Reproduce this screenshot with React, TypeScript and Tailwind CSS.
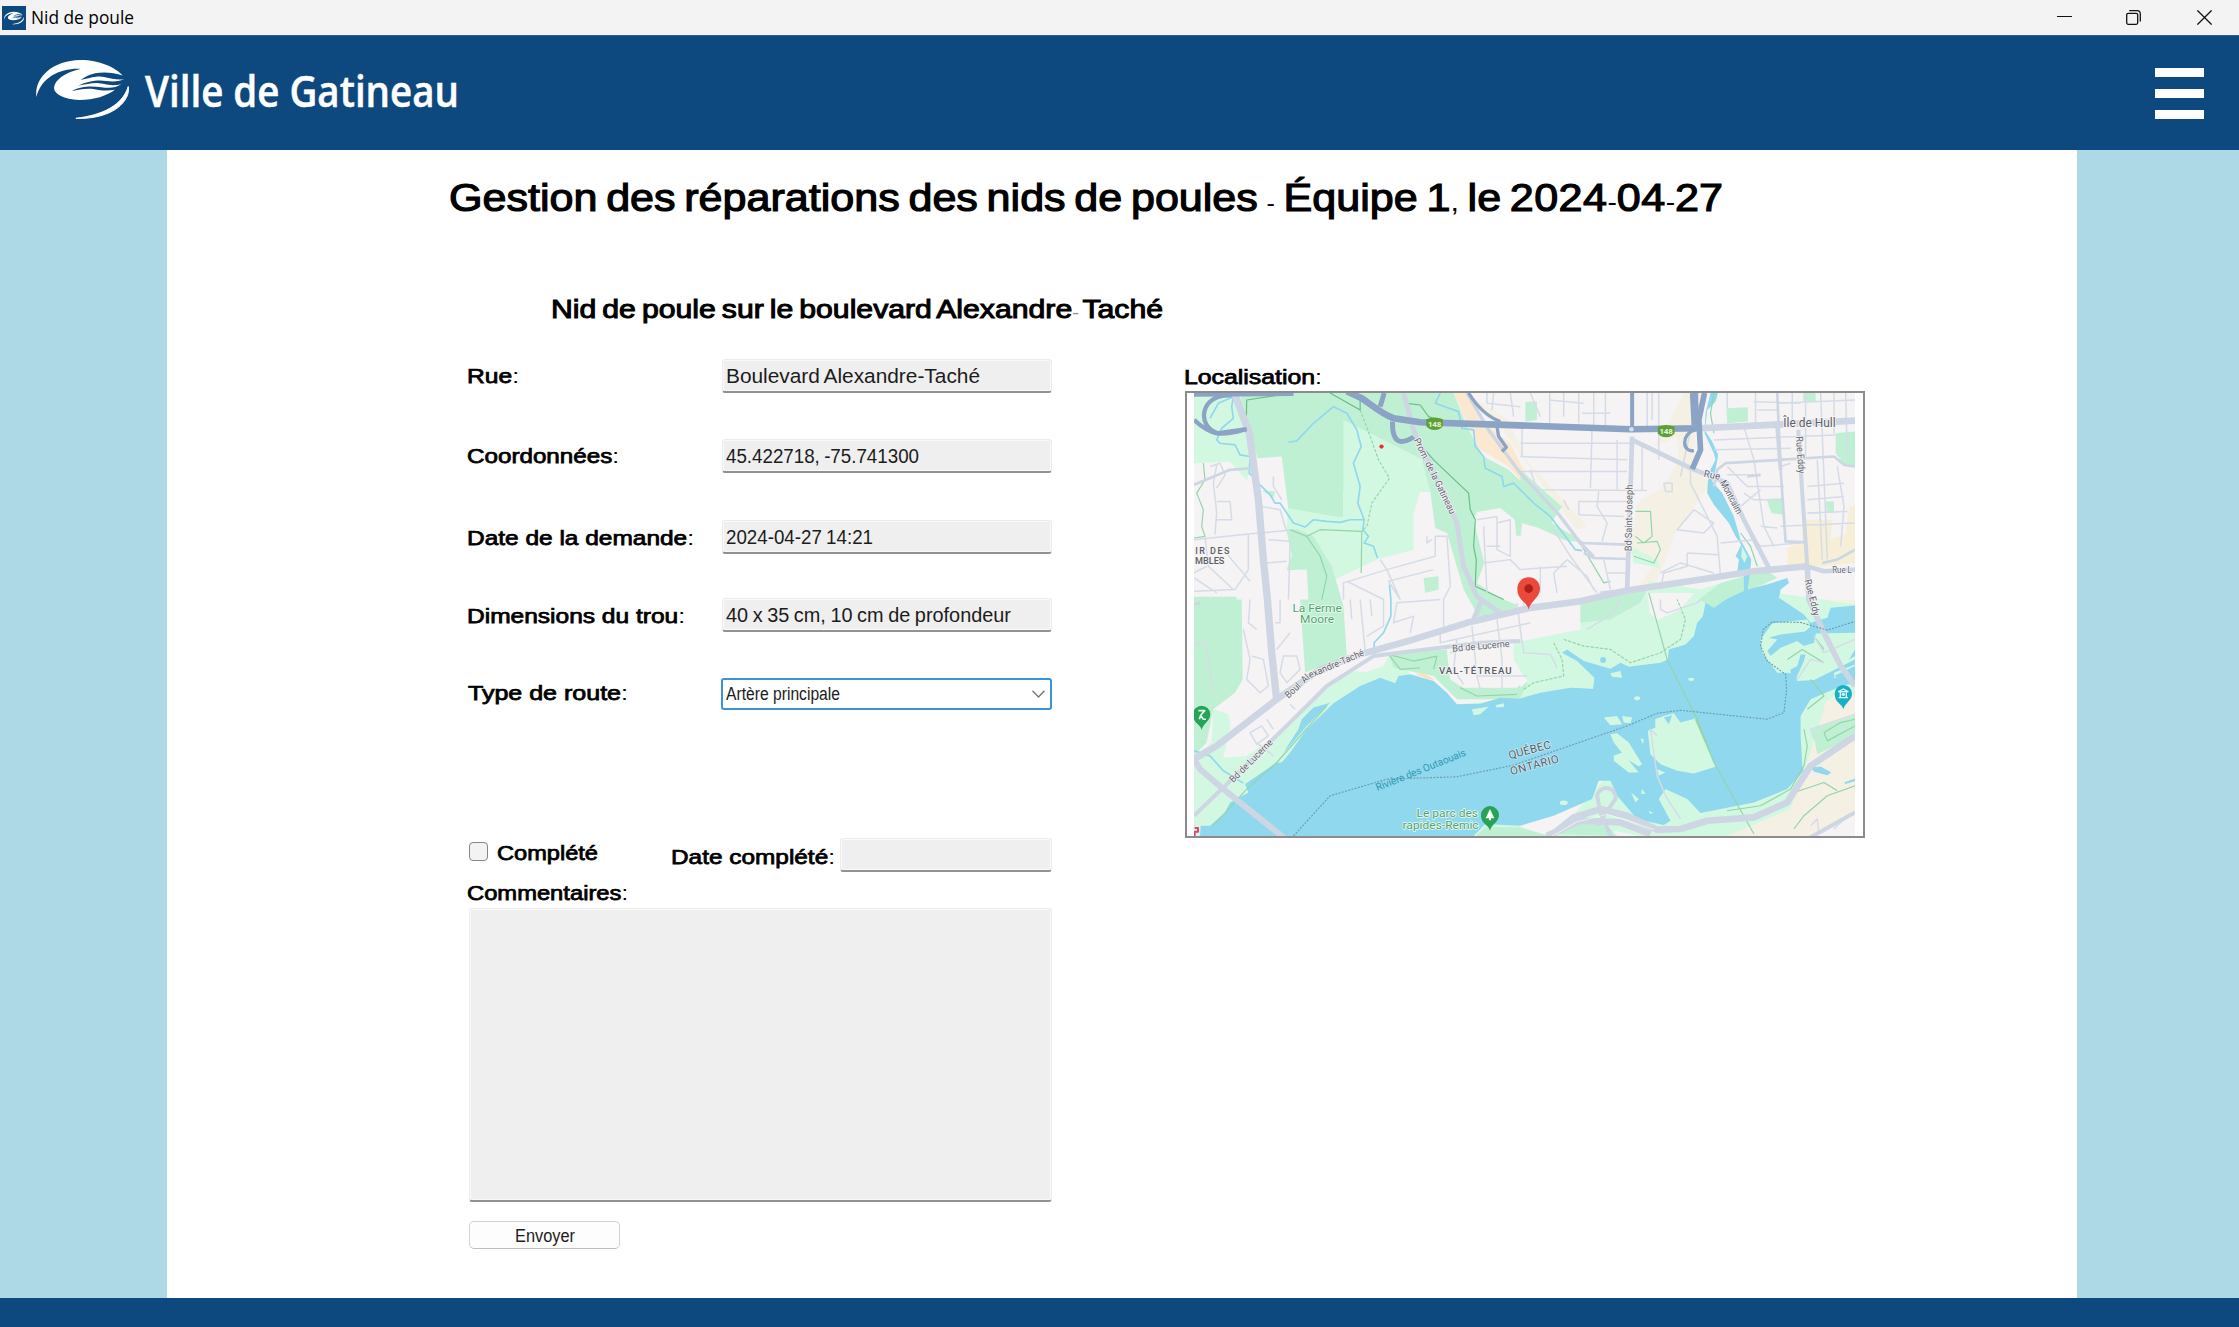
import { useLayoutEffect, useRef, useState } from "react";
import type { ReactNode } from "react";

/** Text stretched or condensed horizontally so that it fills a fixed-width slot. */
function FitText({ width, className = "", children }: { width: string; className?: string; children: ReactNode }) {
  const outer = useRef<HTMLSpanElement>(null);
  const inner = useRef<HTMLSpanElement>(null);
  const [scale, setScale] = useState(1);
  useLayoutEffect(() => {
    if (outer.current && inner.current && inner.current.offsetWidth > 0) {
      setScale(outer.current.offsetWidth / inner.current.getBoundingClientRect().width);
    }
  }, []);
  return (
    <span ref={outer} className={`block shrink-0 whitespace-nowrap ${width} ${className}`}>
      <span ref={inner} className="inline-block origin-left" style={{ transform: `scaleX(${scale})` }}>
        {children}
      </span>
    </span>
  );
}

const LABEL = "text-[20px] leading-[34px] text-black [-webkit-text-stroke:0.75px_#000]";

/** Punctuation is lighter than the letters beside it. */
function Thin({ className = "", children }: { className?: string; children: ReactNode }) {
  return <span className={`[-webkit-text-stroke:0] ${className}`}>{children}</span>;
}

function Emblem({ className }: { className: string }) {
  return (
    <svg className={className} viewBox="0 0 280 178" fill="none">
      <path fill="#fff" d="M1 112C-6 62 38 2 135 0C190 0 240 22 261 47C235 38 205 36 178 40C160 44 146 52 134 60C150 58 172 50 192 50C212 50 232 62 266 58C236 70 214 62 194 62C170 62 152 66 126 78C150 74 170 68 190 70C214 72 232 82 258 72C236 88 216 84 196 82C172 80 140 76 108 94C130 90 150 84 176 88C196 92 214 94 238 90C214 108 176 121 130 121C84 119 54 104 54 84C56 60 86 38 134 27C76 24 16 50 1 112Z" />
      <path fill="#fff" d="M278 80C286 120 236 180 120 176C200 166 260 138 278 80Z" stroke="#fff" strokeWidth="3" />
    </svg>
  );
}

function TitleBar() {
  return (
    <div className="flex h-[35px] w-full items-center bg-[#f3f3f3] pl-[2px]">
      <div className="flex size-6 items-center justify-center bg-[#0d497e]">
        <Emblem className="h-[14px] w-[20px]" />
      </div>
      <FitText width="w-[103px]" className="-mt-[2px] ml-[5px] font-['Open_Sans','Noto_Sans',sans-serif] text-[17.5px] leading-[32px] text-black">
        Nid de poule
      </FitText>
      <div className="ml-auto flex items-center pr-[27px]">
        <svg className="mr-[54px] size-[15px]" viewBox="0 0 15 15" stroke="#111" fill="none">
          <path d="M0 6.5H15" />
        </svg>
        <svg className="mr-[56px] size-[15px]" viewBox="0 0 15 15" stroke="#111" strokeWidth="1.3" fill="none">
          <rect x=".7" y="3.3" width="11" height="11" rx="1.5" />
          <path d="M3.2 .7H11a3.3 3.3 0 0 1 3.3 3.3V11.5" />
        </svg>
        <svg className="size-[15px]" viewBox="0 0 15 15" stroke="#111" strokeWidth="1.3">
          <path d="M.4 .4L14.6 14.6M14.6 .4L.4 14.6" />
        </svg>
      </div>
    </div>
  );
}

function Header() {
  return (
    <header className="flex h-[115px] w-full items-start border-t border-[#2f6190] bg-[#0d497e] pl-9 pr-[35px]">
      <Emblem className="mt-[24px] h-[59px] w-[93px]" />
      <FitText width="w-[314px]" className="ml-[16px] mt-[24px] font-['Open_Sans','Noto_Sans',sans-serif] text-[43px] font-semibold leading-[62px] text-white [-webkit-text-stroke:0.5px_#fff]">
        Ville de Gatineau
      </FitText>
      <div className="ml-auto mt-[32px] flex w-[49px] flex-col gap-[12px]">
        <div className="h-[9px] bg-white" />
        <div className="h-[9px] bg-white" />
        <div className="h-[9px] bg-white" />
      </div>
    </header>
  );
}

function ReadOnlyBox({ className, children }: { className: string; children?: ReactNode }) {
  return (
    <div className={`shrink-0 rounded-[3px] border border-b-2 border-[#ececec] border-b-[#929292] bg-[#efefef] shadow-[inset_0_0_0_1px_#fafafa] ${className}`}>
      {children}
    </div>
  );
}

function Field({ label, labelWidth, labelClass, value, valueWidth, className }: {
  label: string; labelWidth: string; labelClass: string; value: string; valueWidth: string; className: string;
}) {
  return (
    <div className={`flex h-[34px] items-start justify-between ${className}`}>
      <FitText width={labelWidth} className={`${LABEL} ${labelClass}`}>{label}<Thin>:</Thin></FitText>
      <ReadOnlyBox className="h-[34px] w-[330px] pl-[3px]">
        <FitText width={valueWidth} className="text-[20.5px] leading-[31px] text-[#1c1c1c] [word-spacing:-1px]">{value}</FitText>
      </ReadOnlyBox>
    </div>
  );
}

const WATER = "#90d8ee";
const PARK = "#c0f0d4";
const MEADOW = "#d2f8e2";
const ROAD = "#cdd6e2";
const HIGHWAY = "#8ba3c4";

function Pin({ x, y, r, tip, fill }: { x: number; y: number; r: number; tip: number; fill: string }) {
  return (
    <path
      fill={fill}
      d={`M${x} ${y - r}a${r} ${r} 0 0 1 ${r} ${r}c0 ${r * 0.8} ${-r * 0.85} ${(tip - y) * 0.6} ${-r} ${tip - y}c${-r * 0.15} ${-(tip - y) * 0.4} ${-r} ${-(tip - y) * 0.4} ${-r} ${-(tip - y)}a${r} ${r} 0 0 1 ${r} ${-r}Z`}
    />
  );
}

function CityMap() {
  return (
    <svg className="h-[443px] w-[661px] font-[Roboto,sans-serif]" viewBox="42 99 1981 1332" preserveAspectRatio="none" fill="none" strokeLinejoin="round">
      <path fill="#f5f3f4" d="M42 99H2023V1431H42Z" />

      {/* beige districts */}
      <path fill="#f5f0e4" d="M1510 99H1575L1545 215L1540 330L1590 370L1480 530L1440 640L1400 720L1360 700L1430 600L1350 560L1370 430L1450 380L1495 300L1490 230L1420 260L1470 180Z" />
      <path fill="#f7eed8" d="M1865 480H1955L1950 540L2023 510V610L1870 625L1820 635V565L1865 550Z" />
      <path fill="#f7eed8" d="M2005 440H2023V520H1995Z" />
      <path fill="#fbe8d0" d="M820 99H860L900 180L990 250L1060 390L1080 430L985 320L900 270L865 200Z" />
      <path fill="#f5f0e4" d="M880 115L960 200L1090 380L1190 510L1220 500L1030 290L985 180Z" />
      <path fill="#f5f0e4" d="M1840 720H2023V745L1900 760Z" />

      {/* parks */}
      <path fill={MEADOW} d="M42 99H195L215 320L200 362L150 305L42 310Z" />
      <path fill={PARK} d="M180 99H820L860 200L910 290L985 330L1060 400L1140 440L1115 490L1205 545L1165 545L1075 505L1025 490L1022 528H1008L1003 480L960 445L890 457L880 480L912 610L890 670L950 712L1020 740L900 780L850 690L800 520L765 505L750 395H490V475L325 450L305 290L232 295Z" />
      <path fill={MEADOW} d="M490 180L725 298L750 395H720L700 460V570L590 600L465 660L455 620L385 520L320 512L322 445L490 475Z" />
      <path fill={PARK} d="M318 508L350 508L400 530L455 620L490 740L500 890L375 940L360 720H385L380 630L320 632L335 585Z" />
      <path fill={PARK} d="M42 720H185L188 960L165 1000L100 1050L42 1080Z M42 1080L100 1050L80 1150L42 1190Z M730 655L775 650V690L735 700Z M42 712H170V722H42Z M245 392L285 395L280 415Z" />
      <path fill={MEADOW} d="M100 1050L145 1065L152 1100L130 1195L200 1190L290 1130L440 980L560 900L625 895L640 880L700 960L830 1035L1020 1020V1440H42V1190L95 1150Z" />
      <path fill="#f5f3f4" d="M152 1100L130 1195L200 1190L310 1090L430 980L560 900L600 890L300 980Z" />
      <path fill="#f5f3f4" d="M480 940L560 895L625 890L610 920L560 938L500 935Z" />
      <path fill={PARK} d="M625 880L800 870L810 960L840 980L1020 970L1080 960V1020H830L760 950L640 925Z" />
      <path fill="#f5f3f4" d="M800 872L1000 850L1050 950L1010 985L850 985L810 960Z" />
      <path fill={MEADOW} d="M1000 850L1200 810L1205 720L1400 690H1405V665L1560 690L1720 640L1760 675L1640 760L1560 890L1240 985L1080 1002L1020 1015L1042 970L1000 900Z" />
      <path fill="#f5f3f4" d="M1400 700H1540L1500 750L1430 782L1408 760Z M1010 730L1195 715L1200 810L1022 840Z M1020 935L1042 965L1020 985Z" />
      <path fill={PARK} d="M1200 720L1400 690L1380 730L1290 780L1200 790Z M1555 720L1620 670L1760 632L1790 655L1640 720L1600 745Z" />
      <path fill={MEADOW} d="M1350 560L1430 600L1440 625L1360 610Z" />
      <path fill={PARK} d="M1035 125H1070V180L1035 185Z M1638 145L1702 142V185L1640 190Z M1868 99H1905V125H1868Z M1965 220L2023 215V320L1990 315L1965 280Z M1758 418L1805 415L1808 465L1772 460Z M1935 425H1960V458H1938Z M1020 330L1145 440L1110 490L1210 548L1150 540L1070 500L1020 480Z M868 710L900 700L955 745L900 770Z" />
      <path fill={MEADOW} d="M1790 700L2023 735V1440H1120L1235 1300Z" />
      <path fill="#f5f0e4" d="M2023 1010V1431H1640L1830 1350L1890 1180L1935 1030L1990 980Z" />
      <path fill="#f5f3f4" d="M1900 1431L2023 1360V1431Z M1300 1415L1380 1431H1300Z" />

      {/* river */}
      <path fill={WATER} d="M60 1431L62 1400H90L135 1360L150 1330L205 1300L195 1275L290 1210H305L330 1180L380 1110L460 1032L540 980L600 955L645 972L655 950L690 945L760 965L800 1000L830 1035L900 1033L960 1015L1020 1018L1080 1000L1170 985L1238 988L1242 955L1190 905L1145 880L1160 870L1210 905L1290 928L1320 910L1345 922L1440 910L1462 900L1465 870L1515 855L1540 830L1550 790L1567 770L1575 730L1600 745L1640 718L1700 690L1760 675L1820 655L1825 670L1800 690L1795 715L1870 765L1890 790L1940 775L1950 745L2023 738V965L1960 990L1890 1020L1860 1070V1130L1865 1220L1870 1235L1820 1290L1720 1330L1560 1362L1520 1320L1455 1290L1435 1320L1470 1385L1450 1398L1370 1380L1310 1310L1290 1265H1255L1235 1320L1120 1370L1020 1400L915 1395L880 1431Z" />
      <path fill={WATER} d="M1590 99H1612L1605 125L1580 150L1576 190L1575 215L1595 245L1613 285L1605 330L1595 365L1625 400L1660 470L1680 540L1712 600L1708 645L1700 695H1690L1690 650L1670 640L1675 600L1665 590L1682 555L1665 530L1645 490L1600 435L1580 400L1582 365L1590 330L1605 300L1600 280L1572 220L1575 160Z" />
      <path fill={MEADOW} d="M1684 560L1700 590L1692 610L1682 590Z" />
      <path fill={WATER} d="M1890 1225L1920 1222L1952 1240L1940 1248L1900 1238Z M1990 1270L2023 1258V1266L1995 1275Z" />

      {/* islands */}
      <g fill={MEADOW}>
        <path d="M1775 792L1880 780L1890 800L1870 820L1900 822L2023 820V945L1940 960L1850 965L1845 945L1820 940L1790 940L1745 880L1740 840Z" />
        <path d="M1402 1115L1425 1105L1424 1080L1450 1070L1480 1062L1500 1090L1545 1078L1575 1150L1607 1222L1540 1243L1490 1235L1440 1215L1410 1185Z" />
        <path d="M1270 1075L1310 1070L1325 1095L1290 1098Z M1325 1070L1355 1075L1350 1092L1330 1090Z M1290 1125L1310 1122L1345 1150L1385 1215L1375 1222L1340 1200L1300 1150Z M1300 1190L1325 1180L1375 1240L1345 1240L1300 1205Z M1380 1138L1390 1140L1387 1155Z M1290 942L1320 935L1325 955L1295 952Z M1430 1230L1455 1240L1435 1250Z M1352 1300L1375 1320L1365 1330Z M1385 1290L1395 1305L1382 1305Z M1405 1355L1420 1362L1408 1364Z" />
        <path d="M875 1050L925 1042L900 1065L880 1068Z M945 1038L970 1032L972 1042L950 1045Z" />
        <ellipse cx="1532" cy="960" rx="9" ry="5" /><ellipse cx="1370" cy="1017" rx="9" ry="6" /><ellipse cx="1150" cy="1331" rx="12" ry="7" />
      </g>
      <g fill={WATER}>
        <path d="M1760 875L1790 840L1765 835L1800 825L1880 815L1910 800L1900 850L1870 860L1850 845L1800 865L1770 890Z" />
        <path d="M1830 930L1850 920L1860 885L1875 885L1870 905L1845 960L1830 980Z M1905 960L2023 900V915L1960 940V960L2023 940V970L1900 1000L1870 975Z" />
        <path d="M1960 950L2023 920V960L1980 960Z M2005 900L2023 870V890Z M1450 1075L1475 1068L1465 1095Z" />
        <circle cx="1268" cy="902" r="9" />
        <path d="M355 1110L365 1080L400 1045L450 1030L380 1100L325 1165L310 1180Z" />
      </g>
      <path fill="#fbe0b8" d="M705 943L730 942L765 962L740 958Z" />
      <path fill={PARK} d="M1120 1425L1190 1390L1260 1380L1310 1431Z" />
      <path fill={PARK} d="M885 1431L915 1405L1020 1405L1110 1431Z M1895 1110L2023 1068V1130L1910 1185Z" />

      {/* streams */}
      <g stroke={WATER} strokeWidth="5">
        <path d="M325 247L350 243L400 190L460 140L500 160L530 210L543 260L520 310L540 380L533 430L552 480L510 480L480 488L440 485L400 480L375 502L340 490L320 460L300 430L285 430L270 405L240 375L208 340L210 290L180 285L165 255L120 250L110 240L125 205L160 175L155 140L160 110L115 130L90 175M552 480L548 510L565 530L552 550L580 560L592 595" />
        <path d="M780 99L765 130L835 155L845 205L880 210L885 260L910 290L915 325L965 350L970 380L1000 370L1060 430L1110 470L1140 510L1185 570L1205 573" />
        <path d="M628 675L632 720V770L610 820L582 850V890M42 1175L90 1190L130 1235L190 1272" />
      </g>

      {/* paths */}
      <g stroke="#93d4a8" strokeWidth="3.5">
        <path d="M198 220L200 120L340 99M450 99L540 150V115M680 130L720 135L745 170L800 190M700 230L760 300L865 400L870 450L885 480L880 560L888 600L885 680L970 720" stroke="#66bd83" />
        <path d="M540 150L570 230L595 300L628 355L575 430L560 500L545 515" strokeDasharray="9 5" />
        <path d="M70 310L75 360L50 400L70 450L65 500L75 530L42 535M330 510L380 530L420 510L545 515L543 640M380 530L420 590L440 650L425 720" />
        <path d="M625 885L660 930L720 925M625 885L700 905L770 890L760 930M840 985L890 1010L1010 1005" />
        <path d="M1150 840L1210 860L1290 870L1350 910L1440 880L1500 840L1515 780L1490 720M1120 850L1145 900L1150 950L1060 970L1030 990" strokeDasharray="10 4" />
        <path d="M1365 455H1410L1415 530L1390 550L1365 530M1370 550L1430 545L1440 570L1420 610L1360 590M1405 700L1460 900L1550 1080L1600 1210L1720 1425M1545 1080L1605 1220" />
        <path d="M1870 1110L1880 1160L1870 1220L1830 1290L1740 1340L1640 1355M1900 830L1930 870M1820 900L1865 870L1930 910M1890 960L1930 1010L1880 1050M1840 1300L1930 1270L1970 1295M1840 1410L1870 1370L1940 1310L2023 1280" />
        <path d="M1930 1120L1980 1090L2023 1080M1930 1120L1940 1145L2023 1100M1205 560L1270 670L1290 665M100 1400L200 1290L290 1210L440 1040" />
        <path d="M1680 520L1710 560L1730 620M1600 100L1590 160L1600 220" />
      </g>

      {/* local streets */}
      <g stroke="#d5dce7" strokeWidth="4.5">
        <path d="M42 540L205 523L330 512M110 315L100 370L110 460L105 525M90 320L120 310L135 345L110 385M110 425H150L155 480H105M205 525V630L165 690L42 695M125 560L155 600L210 665M75 530L85 620L160 690M42 640L80 620M245 440L300 450L318 510M280 350V380L305 420M265 540L330 545L325 720M260 610L320 605M42 655L110 700" />
        <path d="M490 720V670L620 630L765 590M500 665L610 720V800L560 830M620 630L600 600M620 630L660 720L625 665L760 630M765 590V530H800L810 680L790 720V800M740 530V550L755 540M780 720L650 730L640 790L700 770L690 820M510 720L515 780M540 720L555 875M570 720L575 770M210 720L205 790L230 810M300 720V790H285M190 810L210 900L200 960L240 1000L265 980L250 900L215 890M290 870L330 820M300 940L310 890H350L360 930L320 970Z" />
        <path d="M890 480L950 470V570L990 590V480L950 490M910 610L990 600L1020 630M910 500L920 700M920 560H960M780 820V850L1050 790M875 800L890 950L900 990M950 780L965 900V985M830 840L820 930L850 975M890 950H1040M810 880L1000 840M1010 730L1025 850M330 1035L345 1050M260 1080L280 1110M210 1120L245 1100L265 1130L230 1155ZM230 1150L280 1190M42 860L75 840L100 1000" />
        <path d="M920 99V130L1020 140M940 99L935 150M990 99L1000 170M1050 99L1080 170M1108 99V190M1150 99V170M1195 99V190M1240 99V195M1275 99V195M1400 99V200M1435 99V300M1020 250H1350M1020 290L1340 300M1020 335H1340M1025 190V290M1235 205L1230 385M1050 330L1070 390L1400 392M1105 120L1210 130M1205 160H1290M1385 250V390" />
        <path d="M1195 425H1340M1195 425V465L1330 470M1255 395L1250 440L1280 490L1265 545M1310 240V390M1120 510L1170 590L1250 700M1160 600L1120 640L1130 700M1160 600L1220 650L1240 690M1080 620V700M1020 630L1160 620M1270 600L1290 690M1280 640H1340M1150 420L1165 450" />
        <path d="M1530 330V370L1570 450L1610 530L1620 650M1620 550L1720 540L1740 560L1860 550M1520 580L1615 585M1520 580V620L1450 640L1440 690M1440 640L1500 610L1600 640M1490 510L1540 450L1600 490L1570 520ZM1450 370H1475V395H1455ZM1415 99V180M1555 99L1500 350" />
        <path d="M1640 99V145M1690 200L1720 300L1750 500L1780 560M1725 99V190M1835 99V180M1875 99V290M1920 99L1940 600M1960 99V220M1995 99L2000 300M1600 240L1850 230M1600 270L1830 265M1850 230L1965 225M1730 150H1790M1720 125L1860 130M1790 130L2023 120M1910 300L1925 600M1880 380L1990 370M1880 420L1990 410M1880 460L2000 455M1810 380H1700L1640 320M1810 420H1720L1690 400M1970 320L1990 440L1980 560M1800 500L2023 490M1680 440L1740 390M1640 345L1720 345M1800 320L1830 310M1740 500L1790 505" />
        <path d="M1030 720V750M1560 720L1550 730L1460 760L1440 750L1440 720M1025 840L1030 880L1110 885L1130 925M1220 810L1300 760L1320 720M1430 1130L1410 1110L1430 1250L1455 1310L1500 1380M2000 1370L1960 1410M1890 1400L1910 1380L1915 1420M1900 1140L1890 1110L2023 1065M1850 960L1890 900L1930 910M1900 830L1930 880L2023 840" />
      </g>
      <g stroke="#cdd6e2" strokeWidth="8">
        <path d="M42 735L60 730M42 375L150 330L215 325M1200 550L1340 555M1210 580L1240 595L1340 598M1600 380L1610 330L1635 310L1960 290L1990 315L2023 320M1260 700L1340 690M1925 610L1970 600L2023 570M1790 99L1800 330L1815 545L1875 548M1740 345L1700 350" />
      </g>

      {/* main roads */}
      <g stroke={ROAD} strokeLinecap="butt">
        <path strokeWidth="22" d="M163 99L208 220L235 420L250 600L262 720L275 880L290 1025" />
        <path strokeWidth="20" d="M42 1200L110 1160L290 1020L420 930L540 885L700 840L860 790L1050 745L1200 725L1340 693L1560 660L1720 635L1880 620" />
        <path strokeWidth="14" d="M1870 618L1930 635L2023 630" />
        <path strokeWidth="12" d="M42 1370L130 1285L350 1070L440 980L580 890L700 875L900 850L1020 845" />
        <path strokeWidth="18" d="M42 1200L60 1230L130 1290L310 1435" />
        <path strokeWidth="15" d="M670 99L700 210L780 380L830 490L850 620L890 710L960 760M880 780L905 720" />
        <path strokeWidth="14" d="M1355 230L1350 400L1340 690" />
        <path strokeWidth="14" d="M1355 240L1530 325L1640 370L1690 480L1765 625" />
        <path strokeWidth="20" d="M1560 205L1770 195L2023 182" />
        <path strokeWidth="12" d="M1790 200L1800 330M1853 210L1865 400L1880 620" />
        <path strokeWidth="17" d="M1880 625L1885 720L1930 820L1980 920L2023 980" />
        <path strokeWidth="10" d="M860 99L925 210L1020 340L1140 470L1200 550L1240 592" />
        <path strokeWidth="20" d="M1100 1440L1180 1375L1260 1350L1340 1370L1430 1412L1500 1410L1580 1385L1720 1375L1820 1330L1890 1220L2023 1130M1100 1430L1200 1385L1320 1390L1410 1425" />
        <path strokeWidth="12" d="M1890 1435L2023 1360M1255 1350L1295 1440M1258 1350L1250 1310A27 27 0 1 1 1305 1320L1250 1400" />
      </g>
      <path stroke="#fff" strokeWidth="3" opacity=".6" d="M1110 1435L1190 1388L1280 1366L1360 1390L1420 1412" />
      <g stroke={HIGHWAY}>
        <path strokeWidth="14" d="M42 103L340 101" />
        <path strokeWidth="20" d="M500 94L545 115C580 140 610 165 640 175L720 187L950 194L1350 208L1560 205" />
        <path strokeWidth="15" d="M600 140L612 99M637 185C635 260 670 250 700 232" />
        <path strokeWidth="13" d="M155 106C55 100 50 205 115 220L200 208M42 180C90 225 120 230 190 210" />
        <path strokeWidth="10" d="M865 99C890 140 920 170 960 185M950 200L955 230L978 262L965 275" />
        <path strokeWidth="12" d="M1355 99V205" />
        <path strokeWidth="24" d="M1540 99L1545 195" />
        <path strokeWidth="17" d="M1572 99L1555 180L1560 270L1535 328" />
        <path strokeWidth="10" d="M1545 210C1500 220 1505 280 1540 272" />
      </g>
      <circle cx="1353" cy="208" r="7" fill="#d5e0ec" />

      {/* provincial border */}
      <path stroke="#6d9fae" strokeWidth="3.5" strokeDasharray="6 4" d="M340 1431L450 1310L620 1260L830 1253L1000 1218L1340 1100L1430 1062L1500 1053L1760 1080L1810 1060L1818 990L1815 945L1760 905L1740 860L1748 810L1775 787L1860 789L1940 812L2023 786" />

      {/* street names */}
      <g fill="#5f6670" fontSize="29" stroke="#f5f3f4" strokeWidth="5" paintOrder="stroke">
        <text transform="translate(700 240) rotate(64)" textLength="250" lengthAdjust="spacingAndGlyphs">Prom. de la Gatineau</text>
        <text transform="translate(1353 575) rotate(-89)" textLength="200" lengthAdjust="spacingAndGlyphs">Bd Saint-Joseph</text>
        <text transform="translate(1568 350) rotate(12)" textLength="50">Rue</text>
        <text transform="translate(1618 368) rotate(62)" textLength="110" lengthAdjust="spacingAndGlyphs">Montcalm</text>
        <text transform="translate(1846 230) rotate(86)" textLength="112" lengthAdjust="spacingAndGlyphs">Rue Eddy</text>
        <text transform="translate(1872 662) rotate(76)" textLength="112" lengthAdjust="spacingAndGlyphs">Rue Eddy</text>
        <text x="1955" y="641" textLength="58" lengthAdjust="spacingAndGlyphs">Rue L</text>
        <text transform="translate(325 1018) rotate(-43)" textLength="90" lengthAdjust="spacingAndGlyphs">Boul. Al</text>
        <text transform="translate(390 957) rotate(-23)" textLength="178" lengthAdjust="spacingAndGlyphs">exandre-Taché</text>
        <text transform="translate(160 1272) rotate(-45)" textLength="170" lengthAdjust="spacingAndGlyphs">Bd de Lucerne</text>
        <text transform="translate(817 877) rotate(-5)" textLength="172" lengthAdjust="spacingAndGlyphs">Bd de Lucerne</text>
      </g>
      <g fill="#5a5e66" stroke="#f5f3f4" strokeWidth="6" paintOrder="stroke">
        <text x="1808" y="201" fontSize="36" textLength="157" lengthAdjust="spacingAndGlyphs">Île de Hull</text>
        <text x="46" y="583" fontSize="27" fontWeight="500" textLength="102">IR DES</text>
        <text x="45" y="614" fontSize="27" fontWeight="500" textLength="88" lengthAdjust="spacingAndGlyphs">MBLES</text>
        <text x="776" y="943" fontSize="29" fontWeight="500" textLength="218">VAL-TÉTREAU</text>
      </g>
      <g fill="#555e66" fontSize="34" stroke="#d5eff8" strokeWidth="4" paintOrder="stroke">
        <text transform="translate(988 1200) rotate(-15)" textLength="130">QUÉBEC</text>
        <text transform="translate(993 1248) rotate(-15)" textLength="150">ONTARIO</text>
      </g>
      <text transform="translate(592 1296) rotate(-22)" fontSize="31" fill="#2f98b3" textLength="288" lengthAdjust="spacingAndGlyphs">Rivière des Outaouais</text>
      <g fill="#4da36d" fontSize="34" stroke="#f5fcf8" strokeWidth="4" paintOrder="stroke">
        <text x="337" y="756" textLength="148" lengthAdjust="spacingAndGlyphs">La Ferme</text>
        <text x="360" y="792" textLength="102" lengthAdjust="spacingAndGlyphs">Moore</text>
        <text x="709" y="1374" textLength="184" lengthAdjust="spacingAndGlyphs">Le parc des</text>
        <text x="667" y="1410" textLength="228" lengthAdjust="spacingAndGlyphs">rapides-Remic</text>
      </g>

      {/* route shields */}
      <g fill="#5f9f38">
        <path d="M738 178Q763 168 788 178V198Q780 210 763 210Q746 210 738 198Z" />
        <path d="M1432 200Q1457 190 1482 200V220Q1474 232 1457 232Q1440 232 1432 220Z" />
      </g>
      <g fill="#e8f5dc" fontSize="24" fontWeight="700" textAnchor="middle">
        <text x="763" y="202" textLength="40">148</text>
        <text x="1457" y="222" textLength="40">148</text>
      </g>

      {/* markers */}
      <circle cx="604" cy="260" r="6.5" fill="#e8332a" />
      <Pin x={65} y={1065} r={26} tip={1112} fill="#27a358" />
      <path stroke="#e5f6ea" strokeWidth="5" d="M55 1054H74L62 1068L58 1080M62 1068L70 1080H78" />
      <Pin x={929} y={1368} r={27} tip={1415} fill="#27a358" />
      <path fill="#fff" d="M929 1350L942 1378H932V1384H926V1378H916Z" />
      <Pin x={1988} y={1003} r={26} tip={1050} fill="#18b0c8" />
      <path stroke="#e2fafd" strokeWidth="4" d="M1974 997L1988 989L2002 997ZM1979 999V1014M1997 999V1014M1974 1015H2002" />
      <circle cx="1988" cy="1005" r="5" fill="#e2fafd" />
      <Pin x={1045} y={687} r={34} tip={750} fill="#ea4a3c" />
      <circle cx="1045" cy="687" r="13" fill="#ae1f1a" />
      <path stroke="#ea3f78" strokeWidth="6" d="M44 1407H54V1418H44V1431" />
    </svg>
  );
}

export default function App() {
  return (
    <div className="flex h-[1327px] w-[2239px] flex-col overflow-hidden bg-[#add8e6] font-['Liberation_Sans',Arial,sans-serif]">
      <TitleBar />
      <Header />
      <main className="ml-[167px] h-[1148px] w-[1910px] bg-white">
        <h1 className="ml-[282px] h-[71px] pt-[23px]">
          <FitText width="w-[1274px]" className="text-[39.5px] leading-[48px] text-black [-webkit-text-stroke:1.2px_#000] [word-spacing:-3px]">
            Gestion des réparations des nids de poules <Thin className="text-[23px] leading-none">-</Thin> Équipe 1<Thin className="text-[28px] leading-none">,</Thin> le <span className="tracking-[0.4px]">2024</span>
            <Thin className="text-[26px] leading-none">-</Thin><span className="tracking-[0.4px]">04</span><Thin className="text-[26px] leading-none">-</Thin>27
          </FitText>
        </h1>
        <h2 className="ml-[384px] h-[104px] pt-[72px]">
          <FitText width="w-[612px]" className="text-[25.5px] leading-[32px] text-black [-webkit-text-stroke:1px_#000] [word-spacing:-2px]">
            Nid de poule sur le boulevard Alexandre<Thin className="pr-[3px] text-[17px] leading-none text-[#8a8a8a]">-</Thin>Taché
          </FitText>
        </h2>

        <div className="flex items-start pl-[300px] pt-[34px]">
          <form className="flex w-[585px] flex-col">
            <Field className="" label="Rue" labelWidth="w-[52px]" labelClass="" value="Boulevard Alexandre-Taché" valueWidth="w-[254px]" />
            <Field className="mt-[46px]" label="Coordonnées" labelWidth="w-[152px]" labelClass="" value="45.422718, -75.741300" valueWidth="w-[193px]" />
            <Field className="mt-[47px]" label="Date de la demande" labelWidth="w-[227px]" labelClass="pt-px" value="2024-04-27 14:21" valueWidth="w-[147px]" />
            <Field className="mt-[44px]" label="Dimensions du trou" labelWidth="w-[218px]" labelClass="pt-px" value="40 x 35 cm, 10 cm de profondeur" valueWidth="w-[285px]" />

            <div className="mt-[46px] flex h-[32px] items-start justify-between">
              <FitText width="w-[160px]" className={`${LABEL} -mt-[2px] ml-px`}>Type de route<Thin>:</Thin></FitText>
              <div className="flex h-[32px] w-[331px] items-center justify-between rounded-[3px] border-2 border-[#3a92d8] bg-white pl-[3px] pr-[5px]">
                <FitText width="w-[114px]" className="text-[18px] leading-[26px] text-[#1c1c1c]">Artère principale</FitText>
                <svg className="h-[8px] w-[13px]" viewBox="0 0 13 8" fill="none" stroke="#777" strokeWidth="1.4">
                  <path d="M.5 .8L6.5 7L12.5 .8" />
                </svg>
              </div>
            </div>

            <div className="mt-[128px] flex h-[34px] items-start">
              <div className="ml-[2px] mt-[4px] size-[19px] rounded-[4px] border-[1.5px] border-[#868686] bg-[#f3f3f3]" />
              <FitText width="w-[101px]" className={`${LABEL} -mt-[2px] ml-[9px]`}>Complété</FitText>
              <FitText width="w-[164px]" className={`${LABEL} ml-[73px] mt-[2px]`}>Date complété<Thin>:</Thin></FitText>
              <ReadOnlyBox className="ml-auto h-[34px] w-[212px]" />
            </div>
            <FitText width="w-[161px]" className={`${LABEL} mt-[4px]`}>Commentaires<Thin>:</Thin></FitText>
            <ReadOnlyBox className="-mt-[2px] ml-[2px] h-[294px] w-[583px]" />
            <button type="button" className="ml-[2px] mt-[19px] flex h-[28px] w-[151px] justify-center rounded-[5px] border-[1.5px] border-[#d2d2d2] border-b-[#bdbdbd] bg-[#fdfdfd]">
              <FitText width="w-[60px]" className="mt-px text-left text-[18px] leading-[27px] text-[#1c1c1c]">Envoyer</FitText>
            </button>
          </form>

          <section className="ml-[132px]">
            <FitText width="w-[138px]" className={`${LABEL} -mt-px pt-[2px]`}>Localisation<Thin>:</Thin></FitText>
            <div className="-mt-[3px] ml-px h-[447px] w-[680px] border-2 border-[#8c8c8c] bg-white pl-[7px]">
              <CityMap />
            </div>
          </section>
        </div>
      </main>
      <footer className="w-full flex-1 bg-[#0d497e]" />
    </div>
  );
}
